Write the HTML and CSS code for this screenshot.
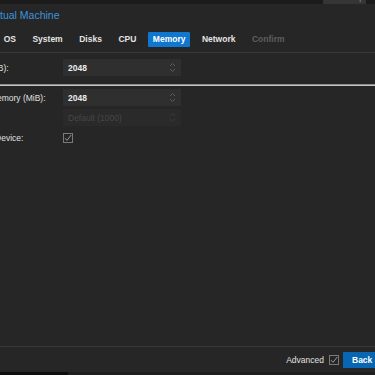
FILE: index.html
```html
<!DOCTYPE html>
<html lang="en">
<head>
    <meta charset="UTF-8" />
    <meta name="viewport" content="width=device-width, initial-scale=1" />
    <title>Create: Virtual Machine</title>
    <link rel="stylesheet" href="styles.css">
</head>
<body>

<div class="topbar">
    <span class="backup">&#8635; Backup</span>
</div>

<div class="dialog">
    <div class="title">Create: Virtual Machine</div>

    <div class="tabs">
        <span class="tab">General</span>
        <span class="tab">OS</span>
        <span class="tab">System</span>
        <span class="tab">Disks</span>
        <span class="tab">CPU</span>
        <span class="tab active">Memory</span>
        <span class="tab">Network</span>
        <span class="tab disabled">Confirm</span>
    </div>

    <div class="form">
        <div class="row">
            <label class="label">Memory (MiB):</label>
            <div class="field">
                <span class="value">2048</span>
                <svg class="spin" width="7" height="11" viewBox="0 0 7 11"><path d="M1 4 L3.5 1.5 L6 4 M1 7 L3.5 9.5 L6 7" fill="none" stroke="#5c5c5c" stroke-width="1"/></svg>
            </div>
        </div>

        <div class="separator"></div>

        <div class="row">
            <label class="label">Minimum memory (MiB):</label>
            <div class="field">
                <span class="value">2048</span>
                <svg class="spin" width="7" height="11" viewBox="0 0 7 11"><path d="M1 4 L3.5 1.5 L6 4 M1 7 L3.5 9.5 L6 7" fill="none" stroke="#5c5c5c" stroke-width="1"/></svg>
            </div>
        </div>
        <div class="row">
            <label class="label"></label>
            <div class="field off">
                <span class="value">Default (1000)</span>
                <svg class="spin" width="7" height="11" viewBox="0 0 7 11"><path d="M1 4 L3.5 1.5 L6 4 M1 7 L3.5 9.5 L6 7" fill="none" stroke="#3a3a3a" stroke-width="1"/></svg>
            </div>
        </div>
        <div class="row check-row">
            <label class="label">Ballooning Device:</label>
            <svg class="check" width="10" height="10" viewBox="0 0 10 10"><rect x="0.5" y="0.5" width="9" height="9" fill="none" stroke="#7a7a7a"/><path d="M2 5.2 L4 7.4 L8.2 2" fill="none" stroke="#9a9a9a" stroke-width="1"/></svg>
        </div>
    </div>

    <div class="footer">
        <span class="adv">Advanced</span>
        <svg class="check" width="10" height="10" viewBox="0 0 10 10"><rect x="0.5" y="0.5" width="9" height="9" fill="none" stroke="#7a7a7a"/><path d="M2 5.2 L4 7.4 L8.2 2" fill="none" stroke="#9a9a9a" stroke-width="1"/></svg>
        <button class="btn">Back</button>
    </div>
</div>

<div class="bottom">
    <div class="bottom-left"></div>
    <div class="bottom-right"></div>
</div>

</body>
</html>
```

FILE: styles.css
```css
body {
    margin: 0;
    width: 375px;
    height: 375px;
    overflow: hidden;
    background-color: #1c1c1c;
    font-family: "Liberation Sans", Arial, sans-serif;
    font-size: 8.5px;
    color: #e2e2e2;
}
.topbar {
    height: 4px;
    overflow: hidden;
    display: flex;
    justify-content: flex-end;
    align-items: flex-end;
    background-color: #1b1b1b;
}
.backup {
    height: 14px;
    line-height: 14px;
    width: 43px;
    margin-right: 9px;
    background-color: #353535;
    color: #8a8a8a;
    text-align: center;
    flex-shrink: 0;
}
/* the dialog runs off both sides of the picture */
.dialog {
    margin-left: -80px;
    width: 475px;
    height: 368px;
    background-color: #262626;
    display: flex;
    flex-direction: column;
}
.title {
    height: 23px;
    line-height: 23px;
    padding-left: 30px;
    font-size: 10.5px;
    color: #3a95de;
}
.tabs {
    display: flex;
    gap: 6.5px;
    padding: 5px 0 5px 30.5px;
    border-bottom: 1px solid #383838;
}
.tab {
    height: 15px;
    line-height: 15px;
    padding: 0 5px;
    font-weight: bold;
    color: #e4e4e4;
    border-radius: 1px;
}
.tab.active {
    background-color: #0f77d0;
    color: #fff;
}
.tab.disabled {
    color: #5e5e5e;
}
.form {
    flex: 1;
    padding-top: 6px;
}
.row {
    display: flex;
    align-items: center;
    margin-bottom: 3px;
}
.label {
    width: 143px;
    padding-left: 33px;
    box-sizing: border-box;
    white-space: nowrap;
    color: #e0e0e0;
}
.field {
    width: 118px;
    height: 17px;
    display: flex;
    align-items: center;
    justify-content: space-between;
    padding: 0 5px;
    box-sizing: border-box;
    background-color: #2f2f2f;
}
.value {
    font-weight: bold;
    color: #ececec;
}
.field.off {
    background-color: #2a2a2a;
}
.field.off .value {
    font-weight: normal;
    color: #464646;
}
.separator {
    height: 1px;
    margin: 8px 0 3px;
    background-color: #c4c4c4;
    border-top: 1px solid #8c8c8c;
}
.check-row {
    height: 17px;
}
.check {
    display: block;
}
.footer {
    height: 25px;
    border-top: 1px solid #383838;
    display: flex;
    align-items: center;
    justify-content: flex-end;
}
.adv {
    margin-right: 5px;
    color: #e0e0e0;
}
.btn {
    margin-left: 4px;
    width: 52px;
    height: 16px;
    padding: 0 0 0 9px;
    border: 0;
    background-color: #0866b2;
    color: #fff;
    font-family: "Liberation Sans", Arial, sans-serif;
    font-size: 8.5px;
    font-weight: bold;
    text-align: left;
}
.bottom {
    display: flex;
    height: 3px;
}
.bottom-left {
    width: 68px;
    background-color: #0e0e0e;
}
.bottom-right {
    flex: 1;
    background-color: #1e1e1e;
}
```
